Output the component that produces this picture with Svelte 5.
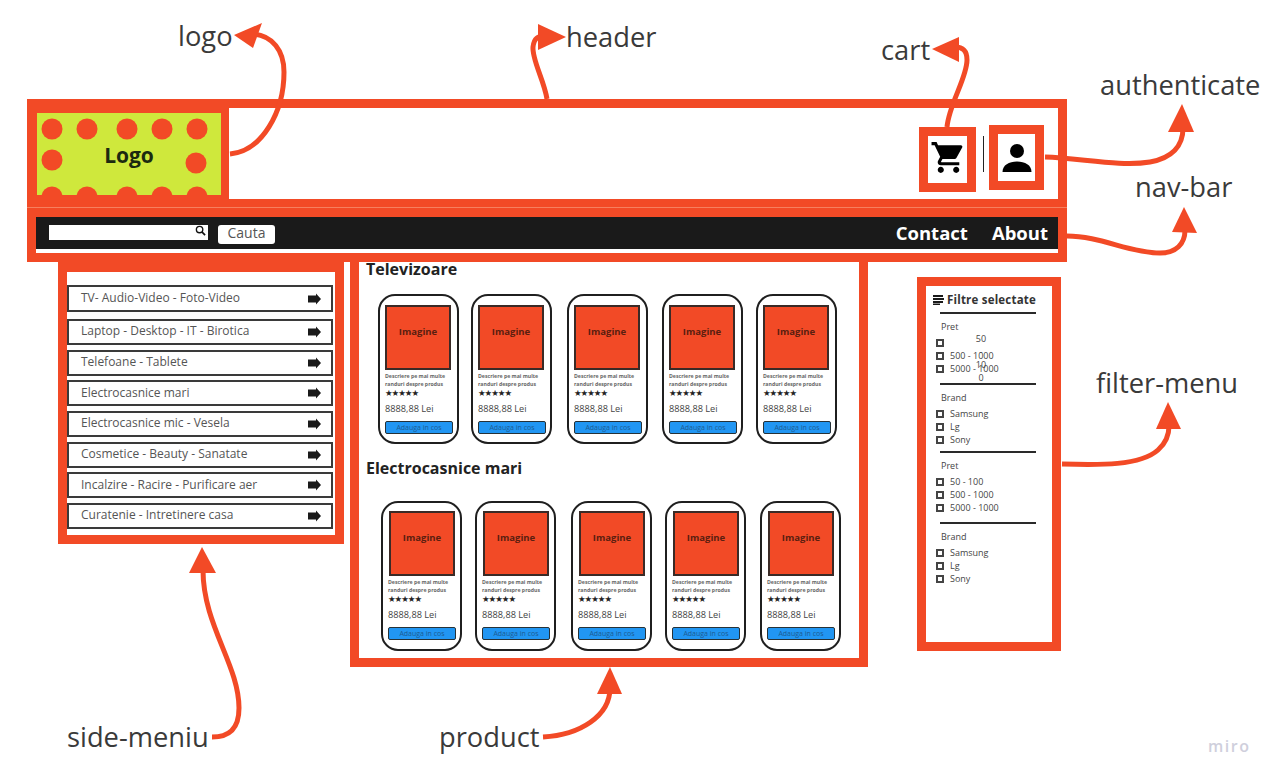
<script>
  const menu = [
    'TV- Audio-Video - Foto-Video',
    'Laptop - Desktop - IT - Birotica',
    'Telefoane - Tablete',
    'Electrocasnice mari',
    'Electrocasnice mic - Vesela',
    'Cosmetice - Beauty - Sanatate',
    'Incalzire - Racire - Purificare aer',
    'Curatenie - Intretinere casa'
  ];

  // gaps between cards differ a little on the board
  const rows = [
    { title: 'Televizoare', gaps: [0, 12, 15, 14, 13] },
    { title: 'Electrocasnice mari', gaps: [0, 13, 15, 13, 14] }
  ];

  const groups = [
    { title: 'Pret', height: 71, items: ['50 - 100', '500 - 1000', '5000 - 1000'], squeezed: true },
    { title: 'Brand', height: 68, items: ['Samsung', 'Lg', 'Sony'] },
    { title: 'Pret', height: 71, items: ['50 - 100', '500 - 1000', '5000 - 1000'] },
    { title: 'Brand', height: 68, items: ['Samsung', 'Lg', 'Sony'] }
  ];

  const labels = [
    { text: 'logo', x: 178, y: 17 },
    { text: 'header', x: 566, y: 18 },
    { text: 'cart', x: 881, y: 31 },
    { text: 'authenticate', x: 1100, y: 66 },
    { text: 'nav-bar', x: 1135, y: 168 },
    { text: 'filter-menu', x: 1096, y: 364 },
    { text: 'side-meniu', x: 67, y: 718 },
    { text: 'product', x: 439, y: 718 }
  ];

  const dots = [
    [15, 16], [50, 16], [90, 16], [125, 16], [160, 16],
    [15, 47], [159, 50],
    [15, 84], [50, 84], [90, 84], [125, 84], [160, 84]
  ];

  const arrows = [
    { d: 'M230 154C262 151 284 112 284 72C284 50 272 36 254 34', head: '234,35 262,23 253,48' },
    { d: 'M547 99C544 80 532 60 533 47C534 38 538 36 545 36', head: '566,37 538,24 538,50' },
    { d: 'M947 127C949 104 967 78 967 60C967 50 962 47 955 47', head: '932,49 959,37 959,62' },
    { d: 'M1045 157C1080 158 1120 167 1150 162C1172 158 1183 146 1183 128', head: '1182,104 1168,132 1194,132' },
    { d: 'M1067 236C1100 236 1130 253 1160 253C1176 253 1185 244 1185 230', head: '1184,207 1172,232 1197,233' },
    { d: 'M1062 464C1100 465 1140 466 1158 450C1166 443 1169 436 1169 426', head: '1168,402 1156,429 1181,429' },
    { d: 'M212 737C228 737 239 730 239 708C239 665 203 625 203 570', head: '202,547 189,573 216,573' },
    { d: 'M543 737C580 735 610 716 610 688', head: '610,667 597,694 622,694' }
  ];
</script>

<div class="board">
  <header class="frame top">
    <div class="logo-box">
      <svg class="dots" viewBox="0 0 184 82" aria-hidden="true">
        {#each dots as [cx, cy]}
          <circle {cx} {cy} r="10.5" fill="#f24a26" />
        {/each}
      </svg>
      <span class="logo-text">Logo</span>
    </div>
    <div class="icons">
      <div class="icon-box cart">
        <svg viewBox="0 0 24 24" width="37" height="37" aria-hidden="true">
          <path d="M7 18c-1.1 0-1.99.9-1.99 2S5.900 22 7 22s2-.9 2-2-.9-2-2-2zM1 2v2h2l3.600 7.590-1.350 2.450c-.16.28-.25.610-.25.960 0 1.100.9 2 2 2h12v-2H7.420c-.14 0-.25-.110-.25-.25l.03-.12.9-1.630h7.450c.75 0 1.410-.410 1.750-1.030l3.580-6.490A1 1 0 0 0 20 4H5.210l-.94-2H1zm16 16c-1.100 0-1.990.9-1.990 2s.89 2 1.990 2 2-.9 2-2-.9-2-2-2z" fill="#000" />
        </svg>
      </div>
      <span class="sep"></span>
      <div class="icon-box user">
        <svg viewBox="0 0 30 30" width="30" height="30" aria-hidden="true">
          <circle cx="15" cy="8" r="7" fill="#000" />
          <path d="M0.500 29C0.500 22 7 18.500 15 18.500S29.500 22 29.500 29Z" fill="#000" />
        </svg>
      </div>
    </div>
  </header>

  <nav class="frame navbar">
    <div class="nav-inner">
      <div class="search">
        <svg viewBox="0 0 12 12" width="11" height="11" aria-hidden="true">
          <circle cx="5" cy="5" r="3.500" fill="none" stroke="#111" stroke-width="1.500" />
          <path d="M7.500 7.500L11 11" stroke="#111" stroke-width="1.800" />
        </svg>
      </div>
      <button class="go">Cauta</button>
      <div class="links"><span>Contact</span><span>About</span></div>
    </div>
  </nav>

  <aside class="frame side">
    {#each menu as item, i}
      <div class="row" class:first={i === 0}>
        <span>{item}</span>
        <svg viewBox="0 0 13 12" width="13" height="12" aria-hidden="true">
          <path d="M0 2.500H8V0.500L13 6L8 11.500V9.500H0Z" fill="#1a1a1a" />
        </svg>
      </div>
    {/each}
  </aside>

  <main class="frame products">
    {#each rows as row, r}
      <h2 class:second={r === 1}>{row.title}</h2>
      <div class="cards" class:lower={r === 1}>
        {#each row.gaps as gap}
          <div class="card" style="margin-left: {gap}px">
            <div class="pic">Imagine</div>
            <p class="desc">Descriere pe mai multe randuri despre produs</p>
            <div class="stars">★★★★★</div>
            <div class="price">8888,88 Lei</div>
            <button class="add">Adauga in cos</button>
          </div>
        {/each}
      </div>
    {/each}
  </main>

  <section class="frame filters">
    <div class="filter-title">
      <svg viewBox="0 0 11 10" width="11" height="10" aria-hidden="true">
        <path d="M0 0H10V2H0ZM0 3H11V5H0ZM0 6H10V8H0ZM0 8.500H7V10H0Z" fill="#1a1a1a" />
      </svg>
      Filtre selectate
    </div>
    {#each groups as group}
      <div class="group" style="height: {group.height}px">
        <div class="group-title">{group.title}</div>
        {#each group.items as item, i}
          <div class="option">
            <span class="check"></span>
            {#if group.squeezed && i === 0}
              <span class="squeezed">{item}</span>
            {:else}
              <span>{item}</span>
            {/if}
          </div>
        {/each}
      </div>
    {/each}
  </section>

  <svg class="arrows" viewBox="0 0 1278 782" aria-hidden="true">
    {#each arrows as a}
      <path d={a.d} fill="none" stroke="#f24a26" stroke-width="5" />
      <polygon points={a.head} fill="#f24a26" />
    {/each}
  </svg>

  {#each labels as l}
    <span class="label" style="left: {l.x}px; top: {l.y}px">{l.text}</span>
  {/each}

  <span class="miro">miro</span>
</div>

<style>
  :global(body) {
    margin: 0;
    background: #fff;
  }
  .board {
    position: relative;
    width: 1278px;
    height: 782px;
    overflow: hidden;
    font-family: "Open Sans", "Liberation Sans", sans-serif;
    color: #2b2b2b;
  }
  .frame {
    position: absolute;
    box-sizing: border-box;
    border: 9px solid #f24a26;
    background: #fff;
  }
  .top {
    left: 27px;
    top: 99px;
    width: 1040px;
    height: 109px;
    display: flex;
    justify-content: space-between;
  }
  .logo-box {
    box-sizing: border-box;
    position: relative;
    width: 202px;
    height: 109px;
    margin-left: -9px;
    margin-top: -9px;
    border: solid #f24a26;
    border-width: 14px 8px 13px 10px;
    background: #cfe83c;
    display: flex;
    align-items: center;
    justify-content: center;
    color: #1c2a10;
    font-weight: 700;
    font-size: 21px;
  }
  .dots {
    position: absolute;
    inset: 0;
    width: 100%;
    height: 100%;
  }
  .logo-text {
    position: relative;
    top: 1px;
  }
  .icons {
    display: flex;
    align-items: flex-start;
    margin-top: 17px;
    margin-right: 14px;
  }
  .icon-box {
    box-sizing: border-box;
    border: 9px solid #f24a26;
    display: flex;
    align-items: center;
    justify-content: center;
  }
  .cart {
    width: 57px;
    height: 65px;
    margin-top: 2px;
  }
  .cart svg {
    margin: 0 0 4px 2px;
  }
  .user {
    width: 55px;
    height: 65px;
  }
  .sep {
    width: 1px;
    height: 36px;
    margin: 11px 5px 0 7px;
    background: #222;
  }
  .navbar {
    left: 27px;
    top: 208px;
    width: 1040px;
    height: 54px;
    box-shadow: 0 -1px 0 #f6805f;
  }
  .nav-inner {
    height: 32px;
    background: #1a1a1a;
    display: flex;
    align-items: flex-start;
    padding: 8px 10px 0 13px;
    box-sizing: border-box;
    position: relative;
  }
  .search {
    width: 159px;
    height: 15px;
    background: #fff;
    display: flex;
    justify-content: flex-end;
    padding-right: 2px;
    box-sizing: border-box;
  }
  .go {
    margin: 0 0 0 10px;
    padding: 0 0 3px;
    width: 57px;
    height: 19px;
    border: 0;
    border-radius: 3px;
    background: #fff;
    color: #555;
    font: 14px/16px "Open Sans", sans-serif;
  }
  .links {
    margin-left: auto;
    display: flex;
    gap: 24px;
    color: #fff;
    font-weight: 700;
    font-size: 18.500px;
    line-height: 16px;
  }
  .side {
    left: 58px;
    top: 262px;
    width: 286px;
    height: 282px;
    padding-top: 13px;
    padding-right: 2px;
    display: flex;
    flex-direction: column;
    gap: 4.670px;
    border-top-width: 10px;
  }
  .row {
    box-sizing: border-box;
    height: 26px;
    flex: none;
    border: 2px solid #3a3a3a;
    display: flex;
    align-items: center;
    justify-content: space-between;
    padding: 0 10px 0 12px;
    font-size: 12px;
    color: #555;
  }
  .row span {
    position: relative;
    top: -1px;
  }
  .row.first {
    height: 27px;
    margin-bottom: 2.330px;
  }
  .products {
    left: 350px;
    top: 253px;
    width: 518px;
    height: 414px;
    padding: 0 0 0 7px;
  }
  h2 {
    margin: 0;
    font-size: 16px;
    line-height: 15px;
    font-weight: 700;
    color: #222;
  }
  h2.second {
    margin-top: 17px;
  }
  .cards {
    display: flex;
    margin: 17px 0 0 12px;
  }
  .cards.lower {
    margin: 25px 0 0 15px;
  }
  .lower .pic {
    margin: -1px 0 0 1px;
  }
  .card {
    box-sizing: border-box;
    width: 81px;
    height: 150px;
    flex: none;
    border: 2px solid #1f1f1f;
    border-radius: 17px;
    padding: 9px 4px 0 5px;
    display: flex;
    flex-direction: column;
  }
  .pic {
    box-sizing: border-box;
    width: 66px;
    height: 65px;
    flex: none;
    border: 2px solid #3a2a26;
    background: #f24a26;
    color: #5a1e10;
    font-size: 9.500px;
    font-weight: 700;
    text-align: center;
    padding-top: 18px;
    line-height: 14px;
  }
  .desc {
    margin: 2px 0 0;
    font-size: 5.200px;
    line-height: 8px;
    font-weight: 700;
    color: #666;
  }
  .stars {
    margin-top: 1px;
    font-size: 8.500px;
    line-height: 9px;
    letter-spacing: -1px;
    color: #222;
    font-family: "DejaVu Sans", sans-serif;
  }
  .price {
    margin-top: 5px;
    font-size: 9.200px;
    line-height: 12px;
    color: #444;
  }
  .add {
    box-sizing: border-box;
    margin: 6px 0 0;
    padding: 0;
    width: 68px;
    height: 13px;
    flex: none;
    border: 1.500px solid #263238;
    border-radius: 2px;
    background: #2196f3;
    color: #1d5c92;
    font: 7px/10px "Open Sans", sans-serif;
  }
  .filters {
    left: 917px;
    top: 277px;
    width: 144px;
    height: 374px;
    padding: 7px 0 0;
  }
  .filter-title {
    display: flex;
    align-items: center;
    gap: 3px;
    padding-left: 7px;
    padding-bottom: 5px;
    font-size: 11.500px;
    line-height: 14px;
    font-weight: 700;
    color: #333;
    letter-spacing: 0.200px;
    white-space: nowrap;
  }
  .group {
    box-sizing: border-box;
    position: relative;
    margin: 0 16px 0 14px;
    padding: 6px 0 0 1px;
    border-top: 2px solid #2a2a2a;
    font-size: 9px;
    line-height: 13px;
    color: #444;
  }
  .group-title {
    margin-bottom: 3px;
  }
  .option {
    display: flex;
    align-items: center;
    height: 13px;
    margin-left: -5px;
  }
  .check {
    box-sizing: border-box;
    width: 8px;
    height: 8px;
    border: 2px solid #444;
    margin-right: 6px;
    flex: none;
  }
  .squeezed {
    position: absolute;
    left: 35px;
    top: 18px;
    width: 12px;
    text-align: center;
    overflow-wrap: anywhere;
  }
  .arrows {
    position: absolute;
    inset: 0;
    width: 1278px;
    height: 782px;
    pointer-events: none;
  }
  .label {
    position: absolute;
    font-size: 27.300px;
    line-height: 37px;
    font-weight: 400;
    color: #3a3a3a;
    white-space: nowrap;
  }
  .miro {
    position: absolute;
    left: 1208px;
    top: 737px;
    font-size: 16px;
    line-height: 18px;
    font-weight: 600;
    letter-spacing: 1.500px;
    color: #cfcfdc;
  }
</style>
